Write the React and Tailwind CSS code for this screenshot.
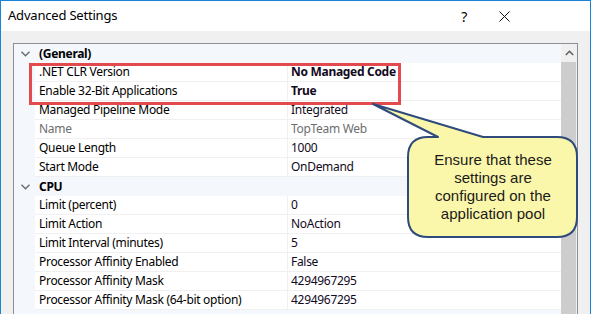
import React from "react";

const rows = [
  { type: "h", label: "(General)" },
  { label: ".NET CLR Version", value: "No Managed Code", bold: true },
  { label: "Enable 32-Bit Applications", value: "True", bold: true },
  { label: "Managed Pipeline Mode", value: "Integrated" },
  { label: "Name", value: "TopTeam Web", dim: true },
  { label: "Queue Length", value: "1000" },
  { label: "Start Mode", value: "OnDemand" },
  { type: "h", label: "CPU" },
  { label: "Limit (percent)", value: "0" },
  { label: "Limit Action", value: "NoAction" },
  { label: "Limit Interval (minutes)", value: "5" },
  { label: "Processor Affinity Enabled", value: "False" },
  { label: "Processor Affinity Mask", value: "4294967295" },
  { label: "Processor Affinity Mask (64-bit option)", value: "4294967295" },
  { type: "h", label: "" },
];

function Chevron() {
  return (
    <svg width="9" height="6" viewBox="0 0 9 6" className="block">
      <path d="M0.5 0.8 L4.5 4.8 L8.5 0.8" fill="none" stroke="#6b6b6b" strokeWidth="1.4" />
    </svg>
  );
}

export default function App() {
  return (
    <div className="relative w-[591px] h-[314px] overflow-hidden border-x border-t border-[#1883d7] bg-[#f0f0f0] font-['Segoe_UI','Noto_Sans',sans-serif] text-[12px] tracking-[-0.3px] text-black">
      <div className="flex h-[30px] items-center bg-white pl-[7px]">
        <span className="text-[13px] tracking-[-0.2px] text-black">Advanced Settings</span>
        <span className="ml-auto mr-[32px] text-[14px] text-black">?</span>
        <svg width="11" height="11" viewBox="0 0 11 11" className="mr-[80px]">
          <path d="M0.5 0.5 L10.5 10.5 M10.5 0.5 L0.5 10.5" stroke="#111" strokeWidth="1" />
        </svg>
      </div>
      <div className="px-[12px] pt-[12px]">
        <div className="flex h-[400px] border border-[#8c8f96] bg-white">
          <div className="flex-1 flex flex-col">
            {rows.map((r, i) =>
              r.type === "h" ? (
                <div key={i} className="flex h-[19px] shrink-0 items-center bg-[#f4f7fc]">
                  <div className="flex w-[21px] justify-center pl-[1px]">
                    <Chevron />
                  </div>
                  <span className="pl-[4px] font-bold text-black leading-[19px]">{r.label}</span>
                </div>
              ) : (
                <div key={i} className="flex h-[19px] shrink-0">
                  <div className="w-[21px] bg-[#f4f7fc]" />
                  <div
                    className={
                      "w-[253px] border-r border-b border-[#f0f0f0] pl-[4px] leading-[18px] whitespace-nowrap overflow-hidden " +
                      (r.dim ? "text-[#6d6d6d]" : "text-black")
                    }
                  >
                    {r.label}
                  </div>
                  <div
                    className={
                      "flex-1 border-b border-[#f0f0f0] pl-[3px] leading-[18px] whitespace-nowrap " +
                      (r.bold ? "font-bold " : "") +
                      (r.dim ? "text-[#6d6d6d]" : "text-[#120a1c]")
                    }
                  >
                    {r.value}
                  </div>
                </div>
              )
            )}
          </div>
          <div className="flex w-[16px] flex-col bg-[#f0f0f0]">
            <div className="flex h-[18px] items-center justify-center">
              <svg width="9" height="6" viewBox="0 0 9 6">
                <path d="M0.8 5 L4.5 1.3 L8.2 5" fill="none" stroke="#606060" strokeWidth="1.6" />
              </svg>
            </div>
            <div className="flex-1 w-[15px] bg-[#cdcdcd]" />
          </div>
        </div>
      </div>

      {/* red highlight box */}
      <div className="absolute left-[28px] top-[62px] h-[42px] w-[372px] border-[3px] border-[#e34a4e]" />

      {/* callout */}
      <svg className="absolute left-[-1px] top-[-1px] pointer-events-none" width="591" height="314" viewBox="0 0 591 314">
        <path
          d="M428 137 L438 137 L373 104 L483 137 L557 137 Q577 137 577 157 L577 217 Q577 237 557 237 L428 237 Q408 237 408 217 L408 157 Q408 137 428 137 Z"
          fill="#fbf7aa"
          stroke="#2f4b7c"
          strokeWidth="2"
          strokeLinejoin="round"
        />
      </svg>
      <div className="absolute left-[407px] top-[136px] flex h-[100px] w-[170px] items-center justify-center text-center font-['Liberation_Sans',Arial,sans-serif] text-[15px] leading-[18px] tracking-normal text-[#1a1a1a]">
        <div>
          Ensure that these
          <br />
          settings are
          <br />
          configured on the
          <br />
          application pool
        </div>
      </div>
    </div>
  );
}
